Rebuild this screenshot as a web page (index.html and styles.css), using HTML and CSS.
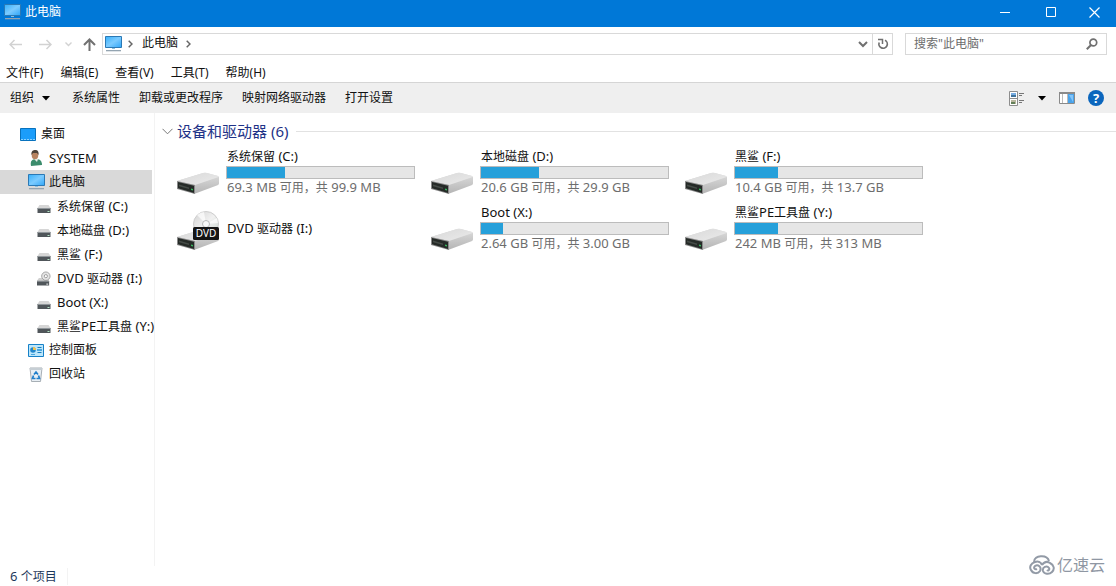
FILE: index.html
```html
<!DOCTYPE html>
<html lang="zh-CN">
<head>
<meta charset="utf-8">
<title>此电脑</title>
<link rel="stylesheet" href="styles.css">
</head>
<body>
<svg class="defs" width="0" height="0" aria-hidden="true">
  <defs>
    <linearGradient id="screen" x1="0" y1="0" x2="1" y2="1"><stop offset="0" stop-color="#35b0fb"/><stop offset=".5" stop-color="#7ccbff"/><stop offset="1" stop-color="#2fa6f8"/></linearGradient>
    <linearGradient id="top" x1="0" y1="0" x2="1" y2="1"><stop offset="0" stop-color="#d8d8d8"/><stop offset="1" stop-color="#ebebeb"/></linearGradient>
    <linearGradient id="side" x1="0" y1="0" x2="0" y2="1"><stop offset="0" stop-color="#dedede"/><stop offset="1" stop-color="#b4b4b4"/></linearGradient>
    <linearGradient id="disc" x1="0" y1="0" x2="1" y2="1"><stop offset="0" stop-color="#d2d2d2"/><stop offset=".5" stop-color="#f1f1f1"/><stop offset="1" stop-color="#c5d2ca"/></linearGradient>
  </defs>
  <symbol id="pc" viewBox="0 0 17 16"><path d="M.5.5h16v11H.5z" fill="url(#screen)" stroke="#2b79b5"/><path d="M7 12h3v1H7z" fill="#8bbfe0"/><path d="M1 14h15v1.300H1z" fill="#94a4b1"/></symbol>
  <symbol id="drive" viewBox="0 0 42 24"><path d="M0 10 26 2q2-.6 4 0l11 3q1 .5 1 1.500v6q0 1-1.500 1.700L17 23z" fill="url(#side)"/><path d="M0 10 26 2q2-.6 4 0l11 3q1 .6 0 1.200L18 14z" fill="url(#top)"/><path d="M0 10l18 4V23L0 18z" fill="#8a8a8a"/><path d="M1 11l16 3.700V22L1 17.200z" fill="#252a27"/><path d="M2 13.500l10 3v1.500l-10-2.800z" fill="#454b47"/><path d="M14 17.500l2 .5v1.500l-2-.5z" fill="#35b45b"/></symbol>
  <symbol id="mini" viewBox="0 0 13 8"><path d="M2 0h9l2 3H0z" fill="#d6d6d6"/><path d="M0 3h13v5H0z" fill="#50565a"/><path d="M0 3h13v1H0z" fill="#90969a"/><path d="M10 6h2v1h-2z" fill="#b5e6c7"/></symbol>
  <symbol id="minidvd" viewBox="0 0 15 15"><path d="M2 7h9l2 3H0z" fill="#d0d0d0"/><circle cx="9.500" cy="5" r="4.500" fill="#e5e5e5" stroke="#a0a0a0"/><circle cx="9.500" cy="5" r="1.700" fill="#fff" stroke="#999"/><path d="M0 10h13v5H0z" fill="#50565a"/><path d="M0 10h13v1H0z" fill="#90969a"/><path d="M10 13h2v1h-2z" fill="#fff"/></symbol>
</svg>
<div class="window">
  <header class="titlebar">
    <svg class="icon-pc" aria-hidden="true"><use href="#pc"/></svg>
    <h1 class="title">此电脑</h1>
    <div class="caption">
      <button class="caption-btn" aria-label="最小化"><svg width="11" height="11"><path d="M0 5.500h10" stroke="#fff"/></svg></button>
      <button class="caption-btn" aria-label="最大化"><svg width="11" height="11"><path d="M.5.5h9v9h-9z" fill="none" stroke="#fff"/></svg></button>
      <button class="caption-btn" aria-label="关闭"><svg width="11" height="11"><path d="M.5.5l10 10m0-10l-10 10" stroke="#fff" stroke-width="1.200"/></svg></button>
    </div>
  </header>
  <div class="navbar">
    <div class="history">
      <button class="nav-btn" aria-label="后退" disabled><svg width="13" height="11"><path d="M1 5.500h12M5.500 1 1 5.500 5.500 10" fill="none" stroke="#d2d2d2" stroke-width="1.500"/></svg></button>
      <button class="nav-btn" aria-label="前进" disabled><svg width="13" height="11"><path d="M0 5.500h12M7.500 1 12 5.500 7.500 10" fill="none" stroke="#d2d2d2" stroke-width="1.500"/></svg></button>
      <button class="nav-btn small" aria-label="最近位置" disabled><svg width="7" height="5"><path d="M.5.5l3 3 3-3" fill="none" stroke="#d2d2d2" stroke-width="1.400"/></svg></button>
      <button class="nav-btn" aria-label="向上"><svg width="13" height="13"><path d="M6.500 13V1.500M1 7l5.500-5.500L12 7" fill="none" stroke="#717171" stroke-width="2"/></svg></button>
    </div>
    <div class="address">
      <svg class="icon-pc" aria-hidden="true"><use href="#pc"/></svg>
      <svg class="crumb" width="5" height="8"><path d="M.7.7 4 4 .7 7.300" fill="none" stroke="#666" stroke-width="1.500"/></svg>
      <a class="place" href="#">此电脑</a>
      <svg class="crumb" width="5" height="8"><path d="M.7.7 4 4 .7 7.300" fill="none" stroke="#666" stroke-width="1.500"/></svg>
      <button class="drop" aria-label="以前的位置"><svg width="10" height="7"><path d="M1 1l4 4 4-4" fill="none" stroke="#707070" stroke-width="2"/></svg></button>
      <button class="refresh" aria-label="刷新"><svg width="12" height="12"><path d="M8 2.300A4.200 4.200 0 1 1 2.200 4.500" fill="none" stroke="#707070" stroke-width="1.700"/><path d="M1 1.500h4.500V6" fill="none" stroke="#707070" stroke-width="1.500"/></svg></button>
    </div>
    <div class="search">
      <input class="search-input" type="text" aria-label="搜索" placeholder='搜索"此电脑"'>
      <svg width="12" height="12" aria-hidden="true"><circle cx="7.300" cy="4.500" r="3.400" fill="none" stroke="#707070" stroke-width="1.700"/><path d="M5 7 .8 11.200" stroke="#707070" stroke-width="2"/></svg>
    </div>
  </div>
  <nav class="menubar">
    <button class="menu">文件(F)</button><button class="menu">编辑(E)</button><button class="menu">查看(V)</button><button class="menu">工具(T)</button><button class="menu">帮助(H)</button>
  </nav>
  <div class="toolbar">
    <button class="tool">组织 <svg class="caret" width="8" height="5"><path d="M0 0h8L4 4.500z"/></svg></button>
    <button class="tool">系统属性</button>
    <button class="tool">卸载或更改程序</button>
    <button class="tool">映射网络驱动器</button>
    <button class="tool">打开设置</button>
    <div class="views">
      <button class="view-btn" aria-label="更改视图"><svg width="16" height="15"><path d="M.5.500h8v14h-8zM.5 7.500h8" fill="#fff" stroke="#8d8d8d"/><path d="M2 2h5v4H2z" fill="#79aee3"/><path d="M2 4h5v2H2z" fill="#40739c"/><path d="M2 9h5v4H2z" fill="#b9b79e"/><path d="M2 11h4v2H2z" fill="#637f58"/><path d="M10 2.500h5M10 4.500h3M10 9.500h5M10 11.500h3" stroke="#777"/></svg></button>
      <button class="view-btn" aria-label="更多选项"><svg width="8" height="5"><path d="M0 0h8L4 4.500z"/></svg></button>
      <button class="view-btn" aria-label="预览窗格"><svg width="16" height="12"><path d="M.5.500h15v11H.5z" fill="#fff" stroke="#8a8a8a"/><path d="M0 0h16v2H0z" fill="#8a8a8a"/><path d="M3.500 2v9M8.500 2v9" stroke="#bbb"/><path d="M9 2h6v9H9z" fill="#4aa3ea"/><path d="M10 3l4 7V3z" fill="#83c5fa"/></svg></button>
      <button class="view-btn help" aria-label="帮助">?</button>
    </div>
  </div>
  <div class="body">
    <nav class="tree">
      <a class="node" href="#"><svg width="17" height="13"><path d="M.5.5h15v12H.5z" fill="#1b9dfa" stroke="#0872bd"/><path d="M1 11.500h14" stroke="#8bd1ff" stroke-dasharray="2 1"/></svg>桌面</a>
      <a class="node child" href="#"><svg width="17" height="16"><path d="M3 16c-1-5 1-7 5-7s6 2 6 6z" fill="#3b8c6c"/><path d="M6 9h4l-1 3z" fill="#e9eee9"/><ellipse cx="7" cy="5" rx="3.300" ry="4.300" fill="#b78360"/><path d="M3.500 5C3 1 5 0 7.500 0S11 2 10.500 5L9 3H5z" fill="#4c4238"/></svg><span class="latin">SYSTEM</span></a>
      <a class="node child selected" href="#" aria-current="page"><svg class="icon-pc"><use href="#pc"/></svg>此电脑</a>
      <a class="node leaf" href="#"><svg class="icon-mini"><use href="#mini"/></svg><span>系统保留<span class="latin"> (C:)</span></span></a>
      <a class="node leaf" href="#"><svg class="icon-mini"><use href="#mini"/></svg><span>本地磁盘<span class="latin"> (D:)</span></span></a>
      <a class="node leaf" href="#"><svg class="icon-mini"><use href="#mini"/></svg><span>黑鲨<span class="latin"> (F:)</span></span></a>
      <a class="node leaf" href="#"><svg class="icon-minidvd"><use href="#minidvd"/></svg><span><span class="latin">DVD </span>驱动器<span class="latin"> (I:)</span></span></a>
      <a class="node leaf" href="#"><svg class="icon-mini"><use href="#mini"/></svg><span class="latin">Boot (X:)</span></a>
      <a class="node leaf" href="#"><svg class="icon-mini"><use href="#mini"/></svg><span>黑鲨<span class="latin">PE</span>工具盘<span class="latin"> (Y:)</span></span></a>
      <a class="node child" href="#"><svg width="17" height="13"><path d="M.5.500h15v12H.5z" fill="#bce6fb" stroke="#1681c8"/><circle cx="5" cy="6" r="2.800" fill="#2387cc"/><path d="M5 3v3h3A3 3 0 0 0 5 3z" fill="#f3c24c"/><path d="M9.500 3.500h4M9.500 8.500h4" stroke="#177dbe"/><path d="M9 5h5v2H9zM3 10h4v1H3z" fill="#4ca8df"/></svg>控制面板</a>
      <a class="node child" href="#"><svg width="17" height="15"><path d="M2 1h12l-1.500 13.500h-9z" fill="#e9eff4" stroke="#a7afb5"/><path d="M2 1h12v2H2z" fill="#c6ced4"/><path d="M6 7.500 8 5l2 2.500M10.500 8.500l1 3H8.500M7.500 11.500h-3l1-3" fill="none" stroke="#217fcb" stroke-width="1.700"/></svg>回收站</a>
    </nav>
    <main class="content">
      <h2 class="group"><svg width="11" height="7"><path d="M.5.800l5 5 5-5" fill="none" stroke="#777"/></svg>设备和驱动器 (6)</h2>
      <div class="drives">
        <article class="drive"><svg class="icon-drive"><use href="#drive"/></svg><div class="info"><h3 class="name">系统保留<span class="latin"> (C:)</span></h3><div class="bar"><div class="used" style="width:31%"></div></div><p class="space"><span class="latin">69.3 MB </span>可用，共<span class="latin"> 99.9 MB</span></p></div></article>
        <article class="drive"><svg class="icon-drive"><use href="#drive"/></svg><div class="info"><h3 class="name">本地磁盘<span class="latin"> (D:)</span></h3><div class="bar"><div class="used" style="width:31%"></div></div><p class="space"><span class="latin">20.6 GB </span>可用，共<span class="latin"> 29.9 GB</span></p></div></article>
        <article class="drive"><svg class="icon-drive"><use href="#drive"/></svg><div class="info"><h3 class="name">黑鲨<span class="latin"> (F:)</span></h3><div class="bar"><div class="used" style="width:23%"></div></div><p class="space"><span class="latin">10.4 GB </span>可用，共<span class="latin"> 13.7 GB</span></p></div></article>
        <article class="drive optical"><svg class="icon-dvd" viewBox="0 0 43 40"><use href="#drive" y="16" width="42" height="24"/><circle cx="29" cy="13" r="12.500" fill="url(#disc)" stroke="#cdcdcd"/><path d="M29 13 20 4a12.500 12.500 0 0 1 7-3zM29 13l12-1-1-5z" fill="#fff" opacity=".7"/><circle cx="29" cy="13" r="3.500" fill="#f8f8f8" stroke="#b7b7b7"/><rect x="16" y="16" width="26" height="13" rx="1.500" fill="#151515"/><text class="disc-label" x="29" y="26" text-anchor="middle">DVD</text></svg><h3 class="name"><span class="latin">DVD </span>驱动器<span class="latin"> (I:)</span></h3></article>
        <article class="drive"><svg class="icon-drive"><use href="#drive"/></svg><div class="info"><h3 class="name"><span class="latin">Boot (X:)</span></h3><div class="bar"><div class="used" style="width:12%"></div></div><p class="space"><span class="latin">2.64 GB </span>可用，共<span class="latin"> 3.00 GB</span></p></div></article>
        <article class="drive"><svg class="icon-drive"><use href="#drive"/></svg><div class="info"><h3 class="name">黑鲨<span class="latin">PE</span>工具盘<span class="latin"> (Y:)</span></h3><div class="bar"><div class="used" style="width:23%"></div></div><p class="space"><span class="latin">242 MB </span>可用，共<span class="latin"> 313 MB</span></p></div></article>
      </div>
    </main>
  </div>
  <footer class="status"><span class="count"><span class="latin">6 </span>个项目</span></footer>
  <div class="brand"><svg width="26" height="20" viewBox="0 0 26 20" fill="none" stroke="#929aa6" stroke-width="2"><path d="M13 10c-1-3-4-4-7-3-4 1-6 5-4 8 2 4 7 4 9 1 2-4-2-7-5-5-2 2 0 4 2 3M5 7c0-7 13-8 15-1M13 10c2-3 5-4 8-2 4 2 5 6 2 9s-8 2-9-1c-1-4 4-6 6-3 1 2-1 3-2 2"/></svg>亿速云</div>
</div>
</body>
</html>
```

FILE: styles.css
```css
* { box-sizing: border-box; }
body { margin: 0; background: #fff; color: #111; font: 12px/16px "Noto Sans", "Noto Sans CJK SC", sans-serif; }
h1, h2, h3, p { margin: 0; font-weight: 400; }
button { border: 0; padding: 0; background: none; color: inherit; font: inherit; }
a { color: inherit; text-decoration: none; }
svg { display: block; flex: none; }
.defs { position: absolute; }
.latin { font-size: 13px; white-space: pre; }
.window { position: relative; display: flex; flex-direction: column; min-height: 100vh; }
.icon-pc { width: 17px; height: 16px; }

.titlebar { display: flex; align-items: center; height: 27px; padding-left: 4px; gap: 4px; padding-bottom: 3px; background: #0078d7; color: #fff; }
.title { font-size: 12px; }
.caption { display: flex; margin-left: auto; }
.caption-btn { display: grid; place-items: center; width: 46px; height: 24px; }
.caption-btn:last-child { width: 42px; padding-right: 2px; }

.navbar { display: flex; align-items: center; padding: 6px 9px 8px 7px; }
.history { display: flex; align-items: center; width: 95px; }
.nav-btn { display: grid; place-items: center; width: 16px; height: 22px; margin-right: 14px; }
.nav-btn.small { width: 8px; margin: 0 9px 0 -3px; }
.nav-btn:last-child { margin: 0; }
.address { display: flex; flex: 1; align-items: center; height: 22px; padding-left: 2px; border: 1px solid #d9d9d9; }
.crumb { margin: 0 9px 0 6px; }
.place { margin: 0 2px 2px 0; }
.drop { margin-left: auto; padding: 6px 4px; }
.refresh { display: grid; place-items: center; width: 20px; height: 20px; border-left: 1px solid #d9d9d9; }
.search { display: flex; align-items: center; width: 202px; height: 22px; margin-left: 12px; padding: 0 8px; border: 1px solid #d9d9d9; }
.search-input { flex: 1; min-width: 0; padding: 0; border: 0; outline: 0; font: inherit; }
.search-input::placeholder { color: #6d6d6d; opacity: 1; }

.menubar { display: flex; gap: 17px; height: 19px; padding-left: 6px; }
.menu { height: 20px; }
.toolbar { display: flex; align-items: center; gap: 19px; height: 31px; padding: 0 12px 0 10px; border-top: 1px solid #d5d5d5; background: #efefef; }
.tool { display: flex; align-items: center; gap: 8px; }
.tool:first-child { margin-right: 3px; }
.views { display: flex; align-items: center; gap: 13px; margin-left: auto; }
.help { width: 16px; height: 16px; border-radius: 50%; background: #0b66bd; color: #fff; font-size: 13px; font-weight: 700; }

.body { display: flex; flex: 1; }
.tree { width: 155px; padding-top: 9px; border-right: 1px solid #f3f3f3; }
.node { display: flex; align-items: center; gap: 4px; height: 24px; margin-right: 2px; padding-left: 20px; white-space: nowrap; }
.child { padding-left: 28px; }
.leaf { gap: 6px; padding-left: 37px; }
.selected { background: #d9d9d9; }
.icon-mini { width: 14px; height: 8px; margin-top: 5px; }
.icon-minidvd { width: 14px; height: 15px; }

.content { flex: 1; padding: 8px 0 0 7px; }
.group { display: flex; align-items: center; gap: 4px; color: #1e3287; font-size: 15px; line-height: 20px; }
.group::after { content: ""; flex: 1; height: 1px; margin-left: 4px; background: #e2e2e2; }
.drives { display: grid; grid-template-columns: repeat(auto-fill, 254px); grid-auto-rows: 56px; padding: 6px 0 0 15px; }
.drive { display: flex; gap: 7px; }
.icon-drive { width: 42px; height: 24px; margin-top: 24px; }
.icon-dvd { width: 43px; height: 40px; margin-top: 5px; }
.optical { align-items: center; padding-bottom: 6px; }
.info { width: 189px; }
.name { font-size: 12px; line-height: 18px; }
.info .name { padding-left: 1px; }
.bar { height: 13px; border: 1px solid #bcbcbc; background: #e6e6e6; }
.used { height: 100%; background: #26a0da; }
.space { padding-left: 1px; color: #6d6d6d; line-height: 16px; }
.disc-label { fill: #fff; font: 10px "Noto Sans", sans-serif; }

.status { display: flex; align-items: center; height: 20px; padding-left: 10px; color: #1e395b; }
.count { padding-right: 10px; border-right: 1px solid #f3f3f3; }
.brand { position: absolute; right: 11px; bottom: 10px; display: flex; align-items: center; gap: 2px; color: #8f97a3; font-size: 16px; line-height: 22px; }
```
